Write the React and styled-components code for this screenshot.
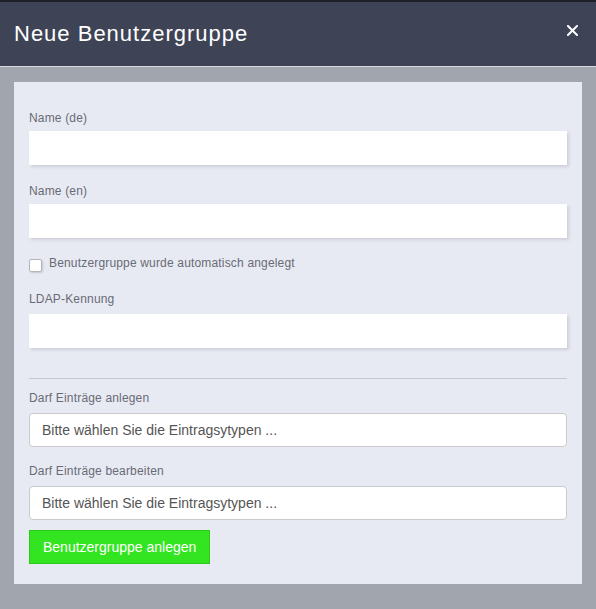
import React from "react";
import styled, { createGlobalStyle } from "styled-components";

const GlobalStyle = createGlobalStyle`
  html, body {
    margin: 0;
    padding: 0;
    background: #a1a5ad;
    font-family: "Liberation Sans", Arial, sans-serif;
  }
  * { box-sizing: border-box; }
`;

const Modal = styled.div`
  width: 596px;
  min-height: 609px;
  background: #a1a5ad;
`;

const Header = styled.header`
  height: 67px;
  background: #3e4456;
  border-top: 2px solid #1f2129;
  border-bottom: 1px solid #d8dae0;
  display: flex;
  align-items: center;
  justify-content: space-between;
  padding: 0 18px 0 14px;
`;

const Title = styled.h1`
  margin: 0;
  font-size: 22px;
  letter-spacing: 1px;
  font-weight: normal;
  color: #ffffff;
  line-height: 30px;
`;

const CloseButton = styled.button`
  border: 0;
  background: none;
  padding: 0;
  width: 11px;
  height: 11px;
  margin-bottom: 7px;
  display: flex;
  cursor: pointer;
`;

const Body = styled.div`
  padding: 15px 14px 25px;
`;

const Card = styled.form`
  background: #e8eaf3;
  padding: 28px 15px 20px;
  display: flex;
  flex-direction: column;
`;

const Group = styled.div`
  display: flex;
  flex-direction: column;
  margin-bottom: ${(p) => p.$gap ?? 18}px;
`;

const Label = styled.label`
  font-size: 12px;
  letter-spacing: 0.17px;
  line-height: 17px;
  color: #696b75;
  margin-bottom: ${(p) => p.$space ?? 4}px;
`;

const TextInput = styled.input`
  height: 34px;
  border: 0;
  background: #ffffff;
  box-shadow: 2px 2px 3px rgba(60, 64, 90, 0.16);
  padding: 0 12px;
  font: inherit;
  font-size: 14px;
  outline: none;
`;

const CheckRow = styled.label`
  display: flex;
  align-items: center;
  gap: 7px;
  font-size: 12px;
  letter-spacing: 0.17px;
  line-height: 17px;
  color: #696b75;
  margin: 1px 0 19px;
`;

const CheckBox = styled.span`
  width: 13px;
  height: 13px;
  background: #ffffff;
  border: 1px solid #b4b5ba;
  border-radius: 2px;
  box-shadow: 1px 1px 2px rgba(0, 0, 0, 0.15);
  margin-top: 3px;
  flex: none;
`;

const Divider = styled.hr`
  border: 0;
  border-top: 1px solid #c7c8ce;
  margin: 12px 0 11px;
  width: 100%;
`;

const Select = styled.div`
  height: 34px;
  background: #ffffff;
  border: 1px solid #c9cacd;
  border-radius: 4px;
  display: flex;
  align-items: center;
  padding: 0 12px;
  font-size: 14px;
  color: #555;
`;

const SubmitButton = styled.button`
  align-self: flex-start;
  height: 34px;
  padding: 0 13px;
  background: #33e520;
  border: 1px solid #2ccb1b;
  color: #ffffff;
  font-family: inherit;
  font-size: 14px;
  cursor: pointer;
`;

const CloseIcon = () => (
  <svg width="11" height="11" viewBox="0 0 11 11">
    <path d="M1 1 L10 10 M10 1 L1 10" stroke="#ffffff" strokeWidth="2" strokeLinecap="square" />
  </svg>
);

export default function App() {
  return (
    <Modal>
      <GlobalStyle />
      <Header>
        <Title>Neue Benutzergruppe</Title>
        <CloseButton type="button" aria-label="Schließen">
          <CloseIcon />
        </CloseButton>
      </Header>
      <Body>
        <Card onSubmit={(e) => e.preventDefault()}>
          <Group>
            <Label>Name (de)</Label>
            <TextInput />
          </Group>
          <Group $gap={16}>
            <Label>Name (en)</Label>
            <TextInput />
          </Group>
          <CheckRow>
            <CheckBox />
            Benutzergruppe wurde automatisch angelegt
          </CheckRow>
          <Group $gap={18}>
            <Label $space={6}>LDAP-Kennung</Label>
            <TextInput />
          </Group>
          <Divider />
          <Group $gap={16}>
            <Label $space={6}>Darf Einträge anlegen</Label>
            <Select>Bitte wählen Sie die Eintragsytypen ...</Select>
          </Group>
          <Group $gap={10}>
            <Label $space={6}>Darf Einträge bearbeiten</Label>
            <Select>Bitte wählen Sie die Eintragsytypen ...</Select>
          </Group>
          <SubmitButton type="submit">Benutzergruppe anlegen</SubmitButton>
        </Card>
      </Body>
    </Modal>
  );
}
